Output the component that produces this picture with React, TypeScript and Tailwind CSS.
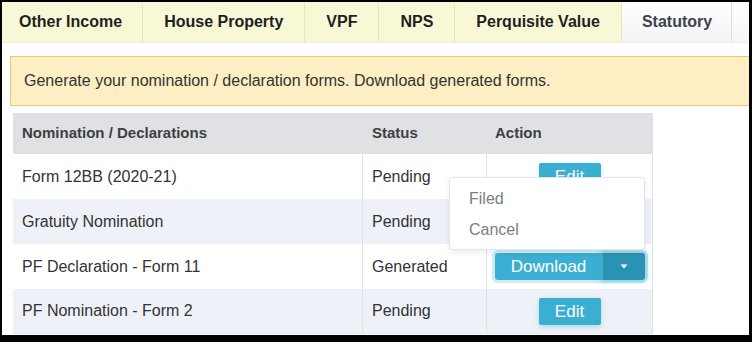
import React from "react";

const tabs = ["Other Income", "House Property", "VPF", "NPS", "Perquisite Value"];

const rows = [
  { name: "Form 12BB (2020-21)", status: "Pending", action: "edit" },
  { name: "Gratuity Nomination", status: "Pending", action: "none" },
  { name: "PF Declaration - Form 11", status: "Generated", action: "download" },
  { name: "PF Nomination - Form 2", status: "Pending", action: "edit" },
];

function EditButton() {
  return (
    <button className="h-[27px] w-[62px] bg-[#3aafd1] text-white text-[17px] leading-none rounded-[2px] shadow-[0_2px_5px_rgba(58,175,209,0.35)]">
      Edit
    </button>
  );
}

function DownloadButton() {
  return (
    <div className="flex h-[27px] w-[150px] rounded-[3px] shadow-[0_0_0_3px_rgba(58,175,209,0.25)]">
      <div className="flex w-[108px] items-center justify-center rounded-l-[3px] bg-[#3aafd1] text-white text-[17px]">
        Download
      </div>
      <div className="flex w-[42px] items-center justify-center rounded-r-[3px] bg-[#2a92b2] shadow-[0_0_4px_2px_rgba(58,175,209,0.45)]">
        <svg width="8" height="5" viewBox="0 0 8 5">
          <path d="M0.5 0.5 L7.5 0.5 L4 4.5 Z" fill="#ffffff" />
        </svg>
      </div>
    </div>
  );
}

export default function App() {
  return (
    <div
      className="w-[752px] h-[342px] bg-black pt-[2px] pl-[2px] overflow-hidden"
      style={{ fontFamily: '"Liberation Sans", Arial, sans-serif' }}
    >
      <div className="relative w-[747px] h-[333px] bg-white overflow-hidden">
        {/* Tabs */}
        <div className="flex h-[41px] bg-[#f9f8d6] border-b border-[#efeee0]">
          {tabs.map((t, i) => (
            <div
              key={t}
              className={`flex items-center border-r border-[#e9e7b8] text-[16px] font-bold text-[#1f1f1f] ${
                i === 0 ? "pl-[17px] pr-[20px]" : "px-[21px]"
              }`}
            >
              {t}
            </div>
          ))}
          <div className="flex items-center border-r border-[#dcdcdc] pl-[20px] pr-[19px] text-[16px] font-bold text-[#3b4350] bg-gradient-to-b from-white to-[#f3f3f3]">
            Statutory
          </div>
          <div className="flex-1 bg-gradient-to-b from-white to-[#f6f6f6]" />
        </div>

        {/* Alert */}
        <div className="mt-[13px] ml-[8px] w-[745px] h-[50px] flex items-center border border-[#f1c76f] bg-[#fdefc3] pl-[13px] text-[16px] text-[#333]">
          Generate your nomination / declaration forms. Download generated forms.
        </div>

        {/* Table */}
        <div className="mt-[7px] ml-[11px] w-[640px] border-b border-[#e3e5ea]">
          <div className="flex h-[41px] bg-[#e0e1e4] text-[15px] font-bold text-[#3f3f3f]">
            <div className="flex w-[350px] items-center pl-[9px]">Nomination / Declarations</div>
            <div className="flex w-[124px] items-center pl-[9px]">Status</div>
            <div className="flex w-[166px] items-center pl-[8px]">Action</div>
          </div>
          {rows.map((r, i) => (
            <div
              key={r.name}
              className={`flex ${i === 3 ? "h-[44px]" : "h-[45px]"} text-[16px] text-[#333] ${
                i % 2 === 1 ? "bg-[#eef1f8]" : "bg-white"
              }`}
            >
              <div className="flex w-[350px] items-center pl-[9px] border-r border-[#dfe1e6]">{r.name}</div>
              <div className="flex w-[124px] items-center pl-[9px] border-r border-[#dfe1e6]">{r.status}</div>
              <div className="flex w-[166px] items-center justify-center border-r border-[#dfe1e6]">
                {r.action === "edit" && <EditButton />}
                {r.action === "download" && <DownloadButton />}
              </div>
            </div>
          ))}
        </div>

        {/* Dropdown menu */}
        <div className="absolute left-[447px] top-[175px] w-[196px] h-[73px] rounded-[4px] border border-[#e4e6ea] bg-white py-[5px] shadow-[0_2px_6px_rgba(0,0,0,0.08)]">
          <div className="flex h-[31px] items-center pl-[19px] text-[16px] text-[#7a7e85]">Filed</div>
          <div className="flex h-[31px] items-center pl-[19px] text-[16px] text-[#7a7e85]">Cancel</div>
        </div>
      </div>
    </div>
  );
}
